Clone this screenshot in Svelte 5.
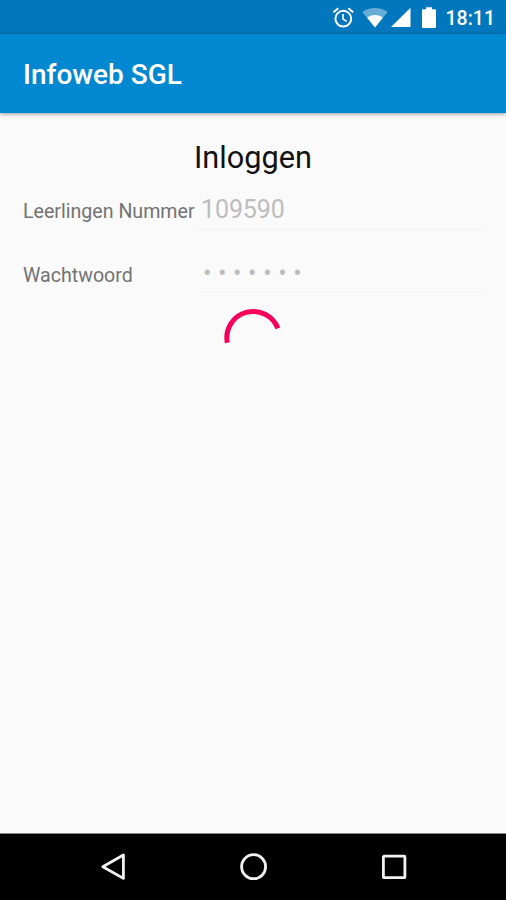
<script>
    let title = 'Infoweb SGL';
    let clock = '18:11';
    let studentNumber = '109590';
    let password = '•••••••';
    let loading = true;
</script>

<div class="screen">
    <div class="status-bar">
        <svg class="alarm" width="22" height="22" viewBox="0 0 22 22" fill="none" stroke="#fff" stroke-width="2">
            <circle cx="11.3" cy="11.7" r="7.9"/>
            <path d="M1.4 5.2l4.9-4M21.2 5.2l-4.9-4"/>
            <path d="M11 7.1v5l3.7 2.3" stroke-width="1.6"/>
        </svg>
        <svg class="wifi" width="26" height="22" viewBox="0 0 26 22" fill="#fff">
            <path d="M13 20.5L0.4 4.9C4 2.2 8.3.9 13 .9s9 1.3 12.6 4z" fill-opacity="0.4"/>
            <path d="M13 20.5L5.2 10.7C7.5 9 10 8.1 13 8.1s5.5.9 7.8 2.6z"/>
        </svg>
        <svg class="signal" width="20" height="22" viewBox="0 0 20 22" fill="#fff">
            <path d="M0 20h19.5V0.8z"/>
        </svg>
        <svg class="battery" width="14" height="22" viewBox="0 0 14 22" fill="#fff">
            <path d="M1.3 2.3h2.7V.3h6v2h2.7c.7 0 1.3.6 1.3 1.3v16.2c0 .7-.6 1.3-1.3 1.3H1.3c-.7 0-1.3-.6-1.3-1.3V3.6c0-.7.6-1.3 1.3-1.3z"/>
        </svg>
        <span class="clock">{clock}</span>
    </div>

    <header class="app-bar">
        <span class="app-title">{title}</span>
    </header>

    <main class="content">
        <h1 class="heading">Inloggen</h1>
        <div class="row">
            <span class="label">Leerlingen Nummer</span>
            <span class="field">{studentNumber}</span>
        </div>
        <div class="row row-password">
            <span class="label">Wachtwoord</span>
            <span class="field password">{password}</span>
        </div>
        {#if loading}
            <svg class="spinner" width="62" height="62" viewBox="0 0 62 62" fill="none" stroke="#f5005a" stroke-width="5">
                <path d="M5.3 35.7A26.4 26.4 0 0 1 55.9 21.4"/>
            </svg>
        {/if}
    </main>

    <nav class="nav-bar">
        <svg width="30" height="30" viewBox="0 0 30 30">
            <path d="M3.8 14.7L24.4 3v23.4z"/>
        </svg>
        <svg width="30" height="30" viewBox="0 0 30 30">
            <circle cx="14.6" cy="14.7" r="12"/>
        </svg>
        <svg width="30" height="30" viewBox="0 0 30 30">
            <rect x="4.4" y="4.2" width="21.5" height="21.5" rx="0.8"/>
        </svg>
    </nav>
</div>

<style>
    :global(body) {
        background: #fafafa;
    }

    .screen {
        display: flex;
        flex-direction: column;
        width: 506px;
        height: 900px;
        overflow: hidden;
        background: #fafafa;
        font-family: Roboto, sans-serif;
    }

    .status-bar {
        display: flex;
        align-items: center;
        justify-content: flex-end;
        flex: none;
        box-sizing: border-box;
        height: 34px;
        padding: 1px 11px 0 0;
        background: #0277bd;
        color: #fff;
    }

    .wifi {
        margin-left: 8px;
    }

    .signal {
        margin-left: 3px;
    }

    .battery {
        margin-left: 11px;
    }

    .clock {
        margin-left: 10px;
        padding-top: 2px;
        font-size: 19.5px;
        font-weight: 500;
        line-height: 22px;
    }

    .app-bar {
        display: flex;
        align-items: center;
        flex: none;
        box-sizing: border-box;
        height: 79px;
        padding: 2px 23px 0;
        background: #0288d1;
        box-shadow: 0 1px 4px rgba(0, 0, 0, 0.4);
        color: #fff;
    }

    .app-title {
        font-size: 28px;
        font-weight: 500;
    }

    .content {
        display: flex;
        flex: 1;
        flex-direction: column;
        padding: 24px 23px 0;
    }

    .heading {
        margin: 0;
        font-size: 30.7px;
        font-weight: 400;
        line-height: 42px;
        text-align: center;
        color: #111;
    }

    .row {
        display: flex;
        height: 63px;
    }

    .label {
        width: 176px;
        flex: none;
        font-size: 19.6px;
        line-height: 65px;
        white-space: nowrap;
        color: #737373;
    }

    .row-password .label {
        line-height: 67px;
    }

    .field {
        flex: 1;
        box-sizing: border-box;
        height: 51px;
        padding-left: 2px;
        border-bottom: 1px solid #f0f0f0;
        font-size: 25px;
        letter-spacing: -0.1px;
        line-height: 62px;
        color: #bdbdbd;
    }

    .password {
        padding-left: 4px;
        border-color: #f5f5f5;
        letter-spacing: 6.6px;
        line-height: 64px;
    }

    .spinner {
        flex: none;
        align-self: center;
        margin-top: 2px;
    }

    .nav-bar {
        display: flex;
        align-items: center;
        justify-content: center;
        gap: 110px;
        flex: none;
        box-sizing: border-box;
        height: 67px;
        padding-left: 1px;
        border-top: 1px solid #8a8a8a;
        background: #000;
    }

    .nav-bar svg {
        fill: none;
        stroke: #f2f2f2;
        stroke-width: 2.8;
        stroke-linejoin: round;
    }
</style>
